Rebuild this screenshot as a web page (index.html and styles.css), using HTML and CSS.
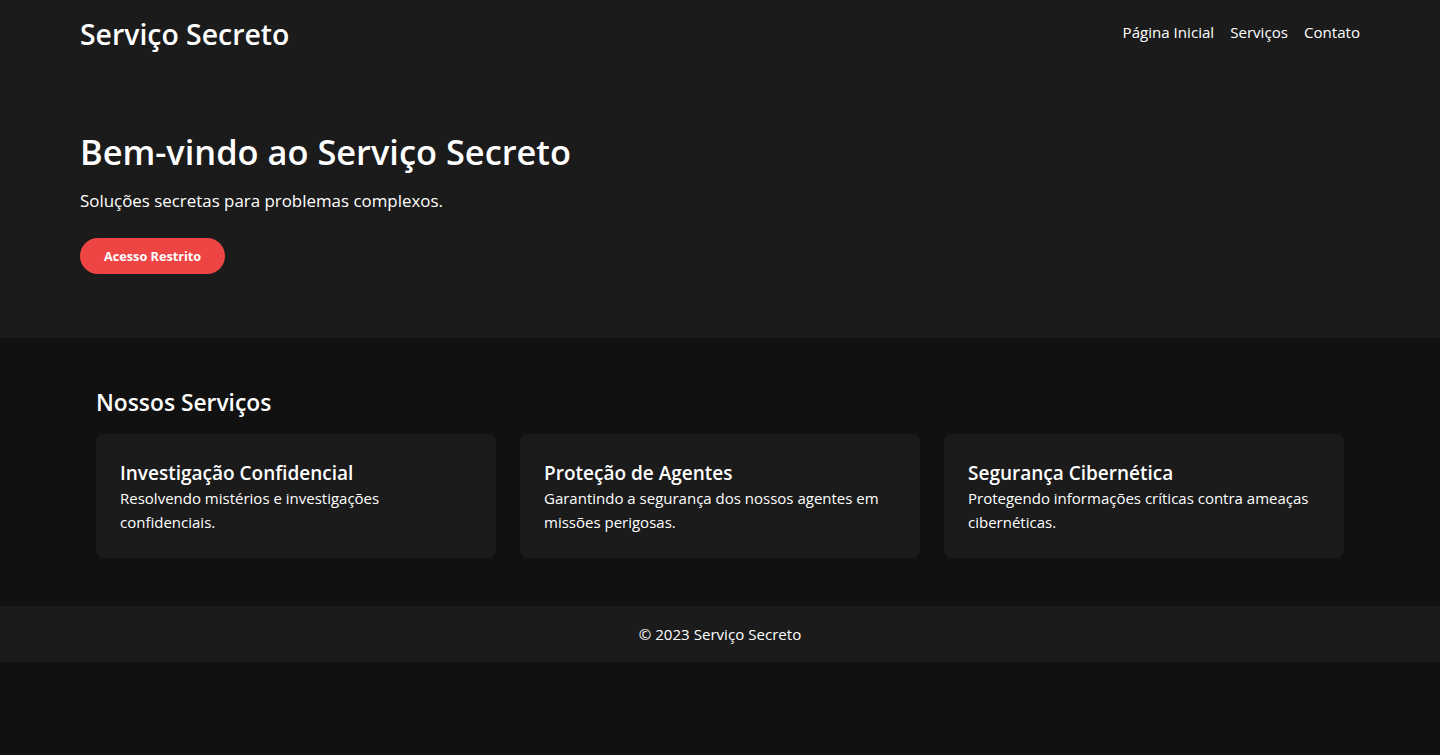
FILE: index.html
```html
<!DOCTYPE html>
<html lang="pt">
<head>
<meta charset="utf-8">
<title>Serviço Secreto</title>
<link rel="stylesheet" href="styles.css">
</head>
<body>
<header class="site-header">
  <div class="container header-inner">
    <h1 class="logo">Serviço Secreto</h1>
    <nav class="nav">
      <a href="#">Página Inicial</a>
      <a href="#">Serviços</a>
      <a href="#">Contato</a>
    </nav>
  </div>
</header>
<section class="hero">
  <div class="container">
    <h2 class="hero-title">Bem-vindo ao Serviço Secreto</h2>
    <p class="hero-text">Soluções secretas para problemas complexos.</p>
    <a href="#" class="btn">Acesso Restrito</a>
  </div>
</section>
<section class="services">
  <div class="container services-inner">
    <h2 class="services-title">Nossos Serviços</h2>
    <div class="cards">
      <div class="card">
        <h3>Investigação Confidencial</h3>
        <p>Resolvendo mistérios e investigações confidenciais.</p>
      </div>
      <div class="card">
        <h3>Proteção de Agentes</h3>
        <p>Garantindo a segurança dos nossos agentes em missões perigosas.</p>
      </div>
      <div class="card">
        <h3>Segurança Cibernética</h3>
        <p>Protegendo informações críticas contra ameaças cibernéticas.</p>
      </div>
    </div>
  </div>
</section>
<footer class="footer">
  <p>© 2023 Serviço Secreto</p>
</footer>
</body>
</html>
```

FILE: styles.css
```css
* { box-sizing: border-box; margin: 0; padding: 0; }
body {
  background: #111111;
  color: #ffffff;
  font-family: "Open Sans", "Noto Sans", sans-serif;
  font-size: 16px;
  line-height: 24px;
}
.container { width: 1280px; margin: 0 auto; }
.site-header { background: #1b1b1b; padding: 16px 0; }
.header-inner { display: flex; justify-content: space-between; align-items: center; }
.logo { font-size: 28.4px; line-height: 36px; font-weight: 600; }
.nav { display: flex; gap: 16px; margin-top: -4px; }
.nav a { color: #fff; text-decoration: none; font-size: 15.1px; }
.hero { background: #1b1b1b; padding: 64px 0; }
.hero-title { font-size: 34.4px; line-height: 40px; font-weight: 600; }
.hero-text { font-size: 16.9px; line-height: 28px; margin-top: 15px; }
.btn {
  display: inline-block;
  margin-top: 23px;
  background: #ef4444;
  color: #fff;
  text-decoration: none;
  font-size: 12.7px;
  font-weight: 700;
  line-height: 20px;
  padding: 8px 24px;
  border-radius: 9999px;
}
.services { padding: 48px 0; }
.services-inner { padding: 0 16px; }
.services-title { font-size: 22.8px; line-height: 32px; font-weight: 600; margin-top: 1px; margin-bottom: 15px; }
.cards { display: grid; grid-template-columns: repeat(3, 1fr); gap: 24px; }
.card { background: #1b1b1b; border-radius: 8px; padding: 24px; }
.card h3 { font-size: 19px; line-height: 28px; font-weight: 600; padding-top: 1px; margin-bottom: -1px; }
.card p { font-size: 15px; line-height: 24px; }
.footer { background: #1b1b1b; padding: 16px 0; text-align: center; font-size: 15.1px; line-height: 24px; }
```
